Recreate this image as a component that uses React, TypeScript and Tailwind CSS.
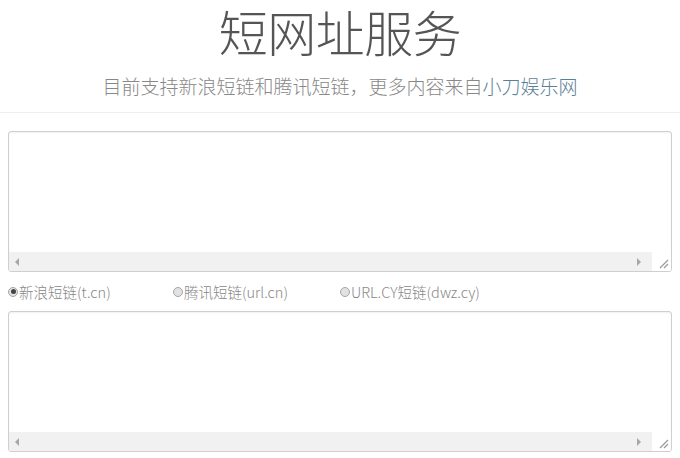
const font = "font-['Noto_Sans_CJK_SC','Noto_Sans',sans-serif]";

const TextBox = () => (
  <div className="flex h-[141px] flex-col overflow-hidden rounded-[3px] border border-[#cfcfcf] bg-white shadow-[inset_0_1px_2px_rgba(0,0,0,0.06)]">
    <textarea className="flex-1 resize-none bg-transparent p-2 text-sm text-[#555] outline-none" />
    <div className="flex h-[19px]">
      <div className="flex flex-1 items-center justify-between bg-[#f1f1f1] px-[5px]">
        <svg width="6" height="8" viewBox="0 0 6 8">
          <path d="M5 0 L1 4 L5 8 Z" fill="#a8a8a8" />
        </svg>
        <svg width="6" height="8" viewBox="0 0 6 8" className="mr-[5px]">
          <path d="M1 0 L5 4 L1 8 Z" fill="#a8a8a8" />
        </svg>
      </div>
      <div className="relative w-[19px] bg-white">
        <svg width="12" height="12" viewBox="0 0 12 12" className="absolute bottom-[2px] right-[2px]">
          <path d="M11 3 L3 11 M11 7 L7 11" stroke="#9a9a9a" strokeWidth="1.2" />
        </svg>
      </div>
    </div>
  </div>
);

const Radio = ({ label, checked }: { label: string; checked?: boolean }) => (
  <label className="flex items-center text-[14.5px] font-light text-[#888]">
    <span className="mr-[1px] flex h-[10px] w-[10px] items-center justify-center rounded-full border border-[#a5a5a5] bg-[#e2e2e2]">
      {checked && <span className="h-[5px] w-[5px] rounded-full bg-[#444]" />}
    </span>
    {label}
  </label>
);

export default function App() {
  return (
    <div className={`h-[458px] w-[680px] overflow-hidden bg-white ${font}`}>
      <header className="flex h-[113px] flex-col items-center border-b border-[#eeeeee]">
        <h1 className="text-[49px] font-light leading-[62px] tracking-[-0.5px] text-[#555]">短网址服务</h1>
        <p className="mt-[10px] text-[19px] font-light leading-[28px] text-[#888]">
          目前支持新浪短链和腾讯短链，更多内容来自<a className="text-[#5b7f96]">小刀娱乐网</a>
        </p>
      </header>
      <div className="px-2 pt-[18px]">
        <TextBox />
        <div className="flex h-[39px] items-center">
          <div className="w-[165px]">
            <Radio label="新浪短链(t.cn)" checked />
          </div>
          <div className="w-[167px]">
            <Radio label="腾讯短链(url.cn)" />
          </div>
          <Radio label="URL.CY短链(dwz.cy)" />
        </div>
        <TextBox />
      </div>
    </div>
  );
}
